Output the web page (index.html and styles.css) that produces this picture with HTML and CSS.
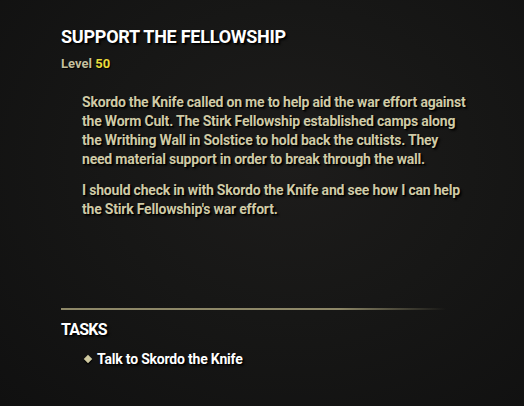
FILE: index.html
```html
<!DOCTYPE html>
<html>
<head>
<meta charset="utf-8">
<link rel="stylesheet" href="styles.css">
</head>
<body>
<div class="panel">
  <h1 class="title">SUPPORT THE FELLOWSHIP</h1>
  <div class="level">Level <span class="level-num">50</span></div>
  <div class="desc">
    <p>Skordo the Knife called on me to help aid the war effort against the Worm Cult. The Stirk Fellowship established camps along the Writhing Wall in Solstice to hold back the cultists. They need material support in order to break through the wall.</p>
    <p>I should check in with Skordo the Knife and see how I can help the Stirk Fellowship's war effort.</p>
  </div>
  <div class="divider"></div>
  <h2 class="tasks-title">TASKS</h2>
  <ul class="tasks">
    <li class="task"><span class="bullet"></span>Talk to Skordo the Knife</li>
  </ul>
</div>
</body>
</html>
```
FILE: styles.css
```css
html, body {
  margin: 0;
  padding: 0;
}
body {
  width: 524px;
  height: 406px;
  overflow: hidden;
  background:
    radial-gradient(ellipse at 55% 40%, #1d1c1b 0%, #171716 45%, #101010 100%);
  font-family: Roboto, "Liberation Sans", sans-serif;
  font-weight: 700;
}
.panel {
  padding: 26px 0 0 61px;
}
.title {
  margin: 0;
  font-size: 18px;
  line-height: 22px;
  font-weight: 700;
  letter-spacing: -0.25px;
  color: #ffffff;
  text-shadow: 1px 1px 0 #000, 2px 2px 2px rgba(0,0,0,0.8);
}
.level {
  margin-top: 7.5px;
  font-size: 13px;
  line-height: 16px;
  color: #c3bf9e;
  text-shadow: 1px 1px 1px #000;
}
.level-num {
  color: #e9db3a;
}
.desc {
  margin: 21px 0 0 21px;
  width: 386px;
  font-size: 14px;
  line-height: 19px;
  letter-spacing: -0.2px;
  color: #cfcaa6;
  text-shadow: 1px 1px 0 #000, 2px 2px 2px rgba(0,0,0,0.8);
}
.desc p {
  margin: 0 0 12px 0;
}
.desc p:last-child {
  margin-bottom: 0;
}
.divider {
  margin-top: 89px;
  width: 385px;
  height: 2px;
  background: linear-gradient(to right, #8e8868 0%, #8e8868 72%, rgba(142,136,104,0) 100%);
}
.tasks-title {
  margin: 10px 0 0 0;
  font-size: 16px;
  line-height: 20px;
  font-weight: 700;
  letter-spacing: -0.8px;
  color: #ffffff;
  text-shadow: 1px 1px 0 #000, 2px 2px 2px rgba(0,0,0,0.8);
}
.tasks {
  list-style: none;
  margin: 10px 0 0 0;
  padding: 0 0 0 23px;
}
.task {
  display: flex;
  align-items: center;
  gap: 5px;
  font-size: 14px;
  line-height: 19px;
  letter-spacing: -0.2px;
  color: #ffffff;
  text-shadow: 1px 1px 0 #000, 2px 2px 2px rgba(0,0,0,0.8);
}
.bullet {
  width: 6px;
  height: 6px;
  background: #cfc9a0;
  transform: rotate(45deg);
  margin: 0 1px 0 1px;
  box-shadow: 1px 1px 1px #000;
}
```
